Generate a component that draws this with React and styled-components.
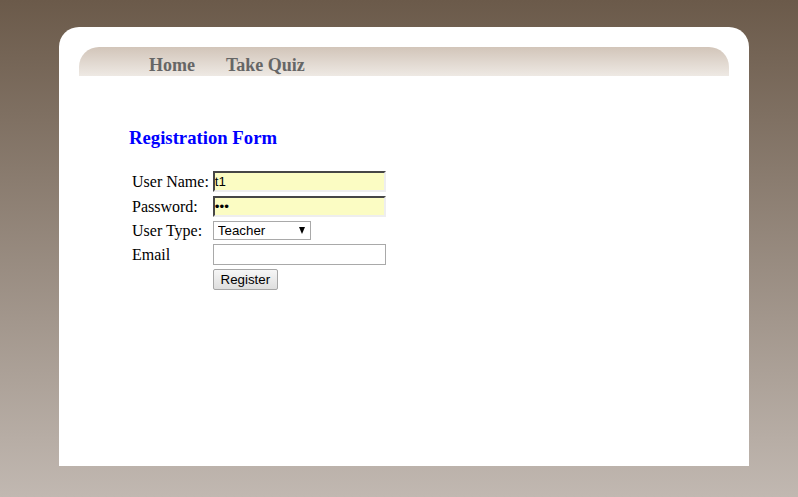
import React from "react";
import styled, { createGlobalStyle } from "styled-components";

const Global = createGlobalStyle`
  html, body {
    margin: 0;
    padding: 0;
  }
  body {
    min-height: 497px;
    background: linear-gradient(to bottom, #6b5a4a 0%, #c1b8b1 100%);
    font-family: "Liberation Serif", "Times New Roman", serif;
  }
`;

const Page = styled.div`
  padding-top: 27px;
  padding-left: 59px;
  height: 470px;
`;

const Panel = styled.div`
  width: 650px;
  height: 399px;
  padding: 20px;
  background: #fff;
  border-radius: 20px 20px 0 0;
`;

const Nav = styled.ul`
  display: flex;
  gap: 31px;
  margin: 0;
  padding: 0 0 0 70px;
  height: 29px;
  list-style: none;
  border-radius: 20px 20px 0 0;
  background: linear-gradient(to bottom, #d2c5b9 0%, #eee9e4 100%);
`;

const NavItem = styled.li`
  font-size: 18px;
  font-weight: bold;
  line-height: 37px;
  color: #666;
`;

const Content = styled.div`
  padding: 51px 0 0 50px;
`;

const Heading = styled.h3`
  margin: 0 0 19px;
  font-size: 18.72px;
  font-weight: bold;
  color: #0000ff;
`;

const Table = styled.table`
  border-spacing: 2px;
  font-size: 16px;
  td {
    padding: 1px;
    vertical-align: middle;
  }
`;

const Field = styled.input`
  display: block;
  box-sizing: border-box;
  width: 173px;
  height: 21px;
  margin: 0;
  padding: 1px ${(p) => (p.$filled ? "0" : "2px")};
  font: 13.33px "Liberation Sans", Arial, sans-serif;
  color: #000;
  background: ${(p) => (p.$filled ? "#fbfcc3" : "#fff")};
  border: ${(p) => (p.$filled ? "2px inset #9a9a9a" : "1px solid #a9a9a9")};
  border-right-color: ${(p) => (p.$filled ? "#eee" : "#a9a9a9")};
  border-bottom-color: ${(p) => (p.$filled ? "#eee" : "#a9a9a9")};
  outline: none;
`;

const SelectWrap = styled.div`
  position: relative;
  width: 98px;
  height: 19px;
`;

const Select = styled.select`
  display: block;
  box-sizing: border-box;
  width: 98px;
  height: 19px;
  margin: 0;
  padding: 0 0 0 4px;
  font: 13.33px "Liberation Sans", Arial, sans-serif;
  color: #000;
  background: #fff;
  border: 1px solid #a9a9a9;
  border-radius: 0;
  appearance: none;
`;

const Caret = styled.span`
  position: absolute;
  right: 6px;
  top: 6px;
  width: 0;
  height: 0;
  border-left: 3.5px solid transparent;
  border-right: 3.5px solid transparent;
  border-top: 7px solid #000;
  pointer-events: none;
`;

const Button = styled.button`
  display: block;
  box-sizing: border-box;
  width: 65px;
  height: 21px;
  margin: 0;
  padding: 0;
  font: 13.33px "Liberation Sans", Arial, sans-serif;
  color: #000;
  background: linear-gradient(to bottom, #f6f6f6, #dedede);
  border: 1px solid #a6a6a6;
  border-radius: 2px;
`;

export default function App() {
  return (
    <>
      <Global />
      <Page>
        <Panel>
          <Nav>
            <NavItem>Home</NavItem>
            <NavItem>Take Quiz</NavItem>
          </Nav>
          <Content>
            <Heading>Registration Form</Heading>
            <Table>
              <tbody>
                <tr>
                  <td>User Name:</td>
                  <td>
                    <Field $filled defaultValue="t1" />
                  </td>
                </tr>
                <tr>
                  <td>Password:</td>
                  <td>
                    <Field $filled type="password" defaultValue="abc" />
                  </td>
                </tr>
                <tr>
                  <td>User Type:</td>
                  <td>
                    <SelectWrap>
                      <Select defaultValue="Teacher">
                        <option>Teacher</option>
                        <option>Student</option>
                      </Select>
                      <Caret />
                    </SelectWrap>
                  </td>
                </tr>
                <tr>
                  <td>Email</td>
                  <td>
                    <Field />
                  </td>
                </tr>
                <tr>
                  <td></td>
                  <td>
                    <Button>Register</Button>
                  </td>
                </tr>
              </tbody>
            </Table>
          </Content>
        </Panel>
      </Page>
    </>
  );
}
